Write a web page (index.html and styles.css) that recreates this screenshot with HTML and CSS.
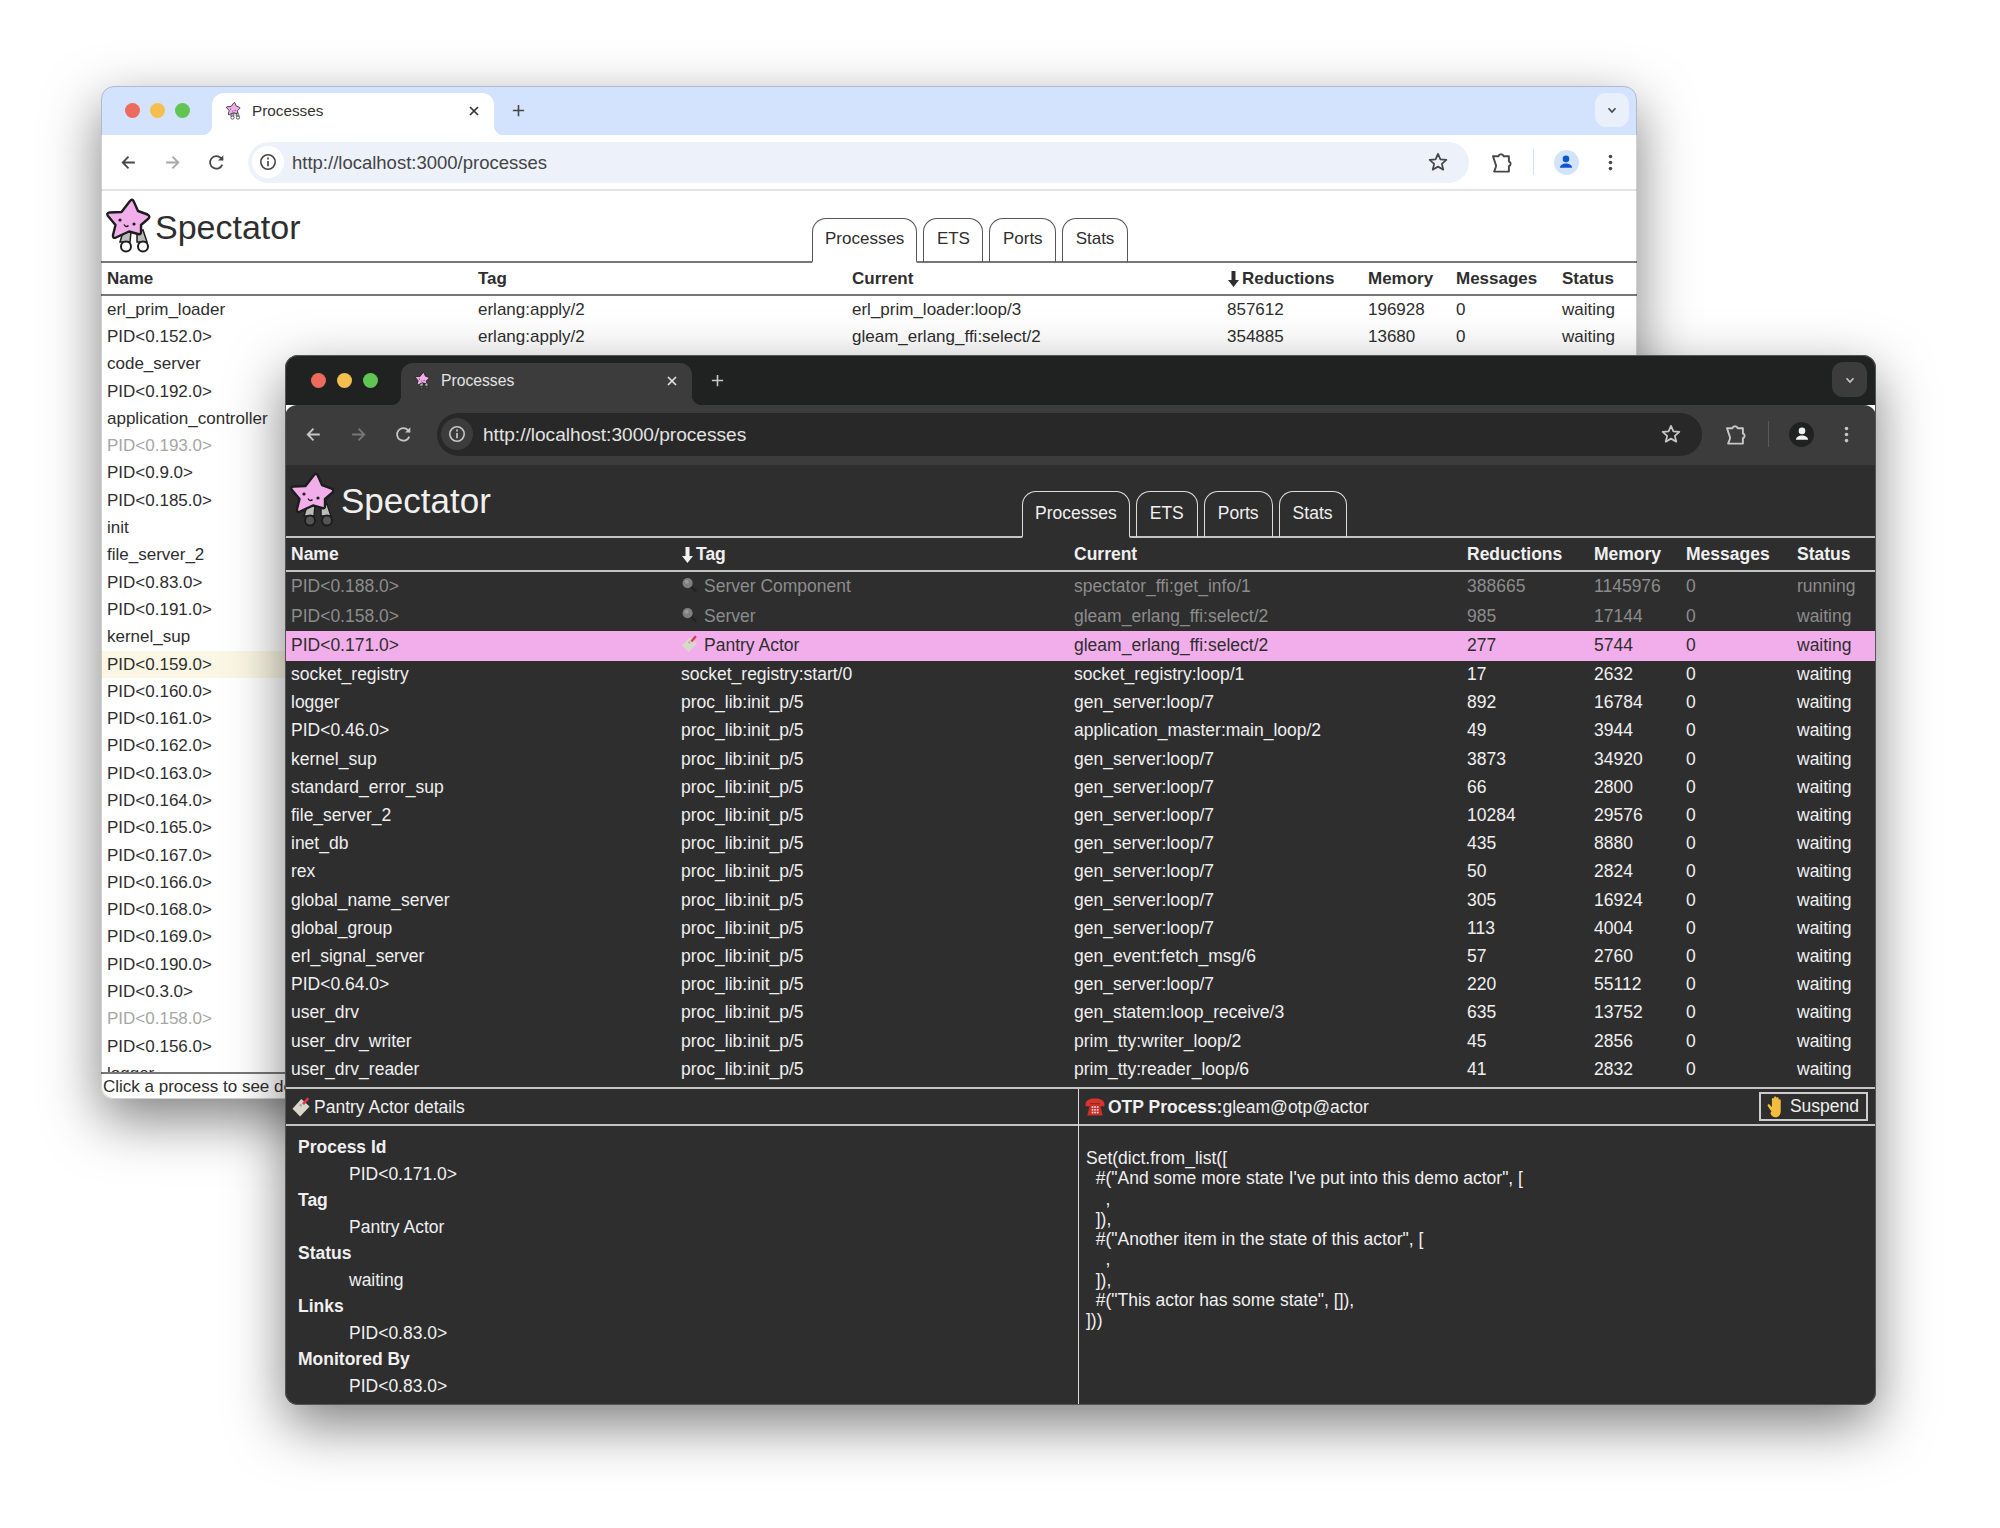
FILE: index.html
```html
<!DOCTYPE html>
<html lang="en">

<head>
    <meta charset="UTF-8">
    <meta name="viewport" content="width=device-width, initial-scale=1.0">
    <title>Spectator</title>
    <link rel="stylesheet" href="styles.css">
</head>

<body>
    <!-- shared icons -->
    <svg class="sprite" width="0" height="0">
        <symbol id="i-logo" viewBox="0 0 55 62">
            <g class="logo-legs">
                <path d="M23 37 L20 47 L30 47 L31 37 Z"/>
                <path d="M37 37 L37 47 L47 47 L43 35 Z"/>
                <circle cx="26" cy="51.500" r="5"/>
                <circle cx="43" cy="51.500" r="5"/>
            </g>
            <path class="logo-star" d="M30 6 Q32.500 3 34 7 L38 16 L47.500 19.500 Q51 21.500 48 24 L41 30 L41 37 Q41 40 38 39 L29 36.500 L16 42.500 Q12.500 44 13 40 L15.500 30 L8 21 Q6 18 9.500 17.500 L21.500 17 Z"/>
            <circle class="logo-face" cx="20" cy="25" r="1.600"/>
            <circle class="logo-face" cx="34" cy="29" r="1.600"/>
            <path class="logo-mouth" d="M24 29.500 Q26 33 28.500 30.500"/>
        </symbol>
        <symbol id="i-back" viewBox="0 0 20 20">
            <path d="M16 10H5M10 4.500 4.500 10l5.500 5.500" fill="none" stroke="currentColor" stroke-width="1.700"/>
        </symbol>
        <symbol id="i-forward" viewBox="0 0 20 20">
            <path d="M4 10h11M10 4.500l5.500 5.500-5.500 5.500" fill="none" stroke="currentColor" stroke-width="1.700"/>
        </symbol>
        <symbol id="i-reload" viewBox="0 0 20 20">
            <path d="M15.500 12a6 6 0 1 1-1.200-6.200L16 7.500" fill="none" stroke="currentColor" stroke-width="1.700"/>
            <path d="M16.500 3v5h-5z" fill="currentColor"/>
        </symbol>
        <symbol id="i-info" viewBox="0 0 20 20">
            <circle cx="10" cy="10" r="7.200" fill="none" stroke="currentColor" stroke-width="1.600"/>
            <path d="M10 9v5.200M10 5.600v1.800" fill="none" stroke="currentColor" stroke-width="1.700"/>
        </symbol>
        <symbol id="i-star" viewBox="0 0 20 20">
            <path d="M10 2.600l2.200 5 5.400.5-4.100 3.600 1.300 5.300L10 14.200 5.200 17l1.300-5.300-4.100-3.600 5.400-.5z" fill="none" stroke="currentColor" stroke-width="1.600" stroke-linejoin="round"/>
        </symbol>
        <symbol id="i-puzzle" viewBox="0 0 22 22">
            <path d="M3.500 5.500h4.800a2.400 2.400 0 0 1 4.600 0h4.600v4.600a2.200 2.200 0 0 1 0 4.200v4.700H4.500l1.300-3.400a2.600 2.600 0 0 0 .2-2.600z" fill="none" stroke="currentColor" stroke-width="1.700" stroke-linejoin="round"/>
        </symbol>
        <symbol id="i-person" viewBox="0 0 24 24">
            <circle cx="12" cy="8.600" r="3.600" fill="currentColor"/>
            <path d="M5.400 18.400c0-3 3-4.800 6.600-4.800s6.600 1.800 6.600 4.800z" fill="currentColor"/>
        </symbol>
        <symbol id="i-kebab" viewBox="0 0 20 20">
            <circle cx="10" cy="4.200" r="1.700" fill="currentColor"/>
            <circle cx="10" cy="10" r="1.700" fill="currentColor"/>
            <circle cx="10" cy="15.800" r="1.700" fill="currentColor"/>
        </symbol>
        <symbol id="i-close" viewBox="0 0 14 14">
            <path d="M3 3l8 8M11 3l-8 8" fill="none" stroke="currentColor" stroke-width="1.700"/>
        </symbol>
        <symbol id="i-plus" viewBox="0 0 16 16">
            <path d="M8 2v12M2 8h12" fill="none" stroke="currentColor" stroke-width="1.700"/>
        </symbol>
        <symbol id="i-chevron" viewBox="0 0 12 12">
            <path d="M2.500 4.200 6 8l3.500-3.800" fill="none" stroke="currentColor" stroke-width="1.600"/>
        </symbol>
        <symbol id="i-sort" viewBox="0 0 12 18">
            <path d="M4 1h4v9h3.500L6 17 .5 10H4z" fill="currentColor"/>
        </symbol>
        <symbol id="i-search" viewBox="0 0 18 18">
            <path d="M10 10l6 6" stroke="#222" stroke-width="2.400"/>
            <circle cx="7" cy="7" r="5.400" fill="#7f7f7f"/>
            <circle cx="6" cy="5.600" r="2.200" fill="#9a9a9a"/>
        </symbol>
        <symbol id="i-tag" viewBox="1.500 1.500 16.500 17">
            <path d="M10 3.200 17 9.500 9 18 2.500 11.400z" fill="#d9d6cc"/>
            <circle cx="9.500" cy="8.500" r="1" fill="#a9a69c"/>
            <path d="M11.500 7.500 16 2.500" stroke="#e0334a" stroke-width="2.200"/>
        </symbol>
        <symbol id="i-phone" viewBox="1 1.500 18 16.500">
            <path d="M1.500 7.500C1.500 3.500 5 2 10 2s8.500 1.500 8.500 5.500v1.500h-4V6.500h-9V9h-4z" fill="#d8332c"/>
            <path d="M5.500 7h9l2.500 10.500H3z" fill="#c62f28"/>
            <g fill="#f5dcd6">
                <rect x="7" y="9" width="1.500" height="1.500"/>
                <rect x="9.300" y="9" width="1.500" height="1.500"/>
                <rect x="11.600" y="9" width="1.500" height="1.500"/>
                <rect x="7" y="11.500" width="1.500" height="1.500"/>
                <rect x="9.300" y="11.500" width="1.500" height="1.500"/>
                <rect x="11.600" y="11.500" width="1.500" height="1.500"/>
                <rect x="7" y="14" width="1.500" height="1.500"/>
                <rect x="9.300" y="14" width="1.500" height="1.500"/>
                <rect x="11.600" y="14" width="1.500" height="1.500"/>
            </g>
        </symbol>
        <symbol id="i-hand" viewBox="2 1.500 12.500 17.500">
            <path d="M5.500 14 2.500 9.500c-.6-1 .8-1.900 1.600-1L5.800 10.500V4c0-1.100 1.600-1.100 1.700 0v4.500V2.800c0-1.200 1.800-1.200 1.800 0v5.700V3.300c0-1.200 1.800-1.200 1.800 0v5.500V5c0-1.100 1.600-1.100 1.700 0v8.500c0 3-1.700 5-4.300 5-1.700 0-3-1.200-4-3.500z" fill="#f5bd3c"/>
        </symbol>
    </svg>

    <!-- light window, sits behind -->
    <section class="win win-light">
        <div class="tabstrip">
            <div class="lights"><i class="red"></i><i class="yellow"></i><i class="green"></i></div>
            <div class="chrome-tab">
                <svg class="favicon"><use href="#i-logo"/></svg>
                <span class="chrome-tab-title">Processes</span>
                <svg class="ico-close"><use href="#i-close"/></svg>
            </div>
            <svg class="ico-plus"><use href="#i-plus"/></svg>
            <div class="strip-menu"><svg class="ico-chevron"><use href="#i-chevron"/></svg></div>
        </div>
        <div class="toolbar">
            <span class="tb-btn"><svg><use href="#i-back"/></svg></span>
            <span class="tb-btn tb-off"><svg><use href="#i-forward"/></svg></span>
            <span class="tb-btn"><svg><use href="#i-reload"/></svg></span>
            <div class="omni">
                <span class="omni-info"><svg><use href="#i-info"/></svg></span>
                <span class="omni-url">http://localhost:3000/processes</span>
                <svg class="omni-star"><use href="#i-star"/></svg>
            </div>
            <span class="tb-btn"><svg class="puzzle"><use href="#i-puzzle"/></svg></span>
            <span class="tb-sep"></span>
            <span class="tb-btn"><span class="avatar"><svg><use href="#i-person"/></svg></span></span>
            <span class="tb-btn"><svg><use href="#i-kebab"/></svg></span>
        </div>
        <div class="page">
            <header class="app-head">
                <div class="brand">
                    <svg class="logo"><use href="#i-logo"/></svg>
                    <span class="brand-name">Spectator</span>
                </div>
                <nav class="tabs">
                    <a class="tab active">Processes</a>
                    <a class="tab">ETS</a>
                    <a class="tab">Ports</a>
                    <a class="tab">Stats</a>
                </nav>
            </header>
            <div class="table-wrap">
                <table class="proc-table">
                    <colgroup>
                        <col class="c-name"><col class="c-tag"><col class="c-current"><col class="c-red"><col class="c-mem"><col class="c-msg"><col class="c-status">
                    </colgroup>
                    <thead>
                        <tr><th>Name</th><th>Tag</th><th>Current</th><th><svg class="sort"><use href="#i-sort"/></svg>Reductions</th><th>Memory</th><th>Messages</th><th>Status</th></tr>
                    </thead>
                    <tbody>
                        <tr><td>erl_prim_loader</td><td>erlang:apply/2</td><td>erl_prim_loader:loop/3</td><td>857612</td><td>196928</td><td>0</td><td>waiting</td></tr>
                        <tr><td>PID&lt;0.152.0&gt;</td><td>erlang:apply/2</td><td>gleam_erlang_ffi:select/2</td><td>354885</td><td>13680</td><td>0</td><td>waiting</td></tr>
                        <tr><td colspan="7">code_server</td></tr>
                        <tr><td colspan="7">PID&lt;0.192.0&gt;</td></tr>
                        <tr><td colspan="7">application_controller</td></tr>
                        <tr class="dim"><td colspan="7">PID&lt;0.193.0&gt;</td></tr>
                        <tr><td colspan="7">PID&lt;0.9.0&gt;</td></tr>
                        <tr><td colspan="7">PID&lt;0.185.0&gt;</td></tr>
                        <tr><td colspan="7">init</td></tr>
                        <tr><td colspan="7">file_server_2</td></tr>
                        <tr><td colspan="7">PID&lt;0.83.0&gt;</td></tr>
                        <tr><td colspan="7">PID&lt;0.191.0&gt;</td></tr>
                        <tr><td colspan="7">kernel_sup</td></tr>
                        <tr class="hover"><td colspan="7">PID&lt;0.159.0&gt;</td></tr>
                        <tr><td colspan="7">PID&lt;0.160.0&gt;</td></tr>
                        <tr><td colspan="7">PID&lt;0.161.0&gt;</td></tr>
                        <tr><td colspan="7">PID&lt;0.162.0&gt;</td></tr>
                        <tr><td colspan="7">PID&lt;0.163.0&gt;</td></tr>
                        <tr><td colspan="7">PID&lt;0.164.0&gt;</td></tr>
                        <tr><td colspan="7">PID&lt;0.165.0&gt;</td></tr>
                        <tr><td colspan="7">PID&lt;0.167.0&gt;</td></tr>
                        <tr><td colspan="7">PID&lt;0.166.0&gt;</td></tr>
                        <tr><td colspan="7">PID&lt;0.168.0&gt;</td></tr>
                        <tr><td colspan="7">PID&lt;0.169.0&gt;</td></tr>
                        <tr><td colspan="7">PID&lt;0.190.0&gt;</td></tr>
                        <tr><td colspan="7">PID&lt;0.3.0&gt;</td></tr>
                        <tr class="dim"><td colspan="7">PID&lt;0.158.0&gt;</td></tr>
                        <tr><td colspan="7">PID&lt;0.156.0&gt;</td></tr>
                        <tr><td colspan="7">logger</td></tr>
                    </tbody>
                </table>
            </div>
            <div class="status-note">Click a process to see details</div>
        </div>
    </section>

    <!-- dark window, in front -->
    <section class="win win-dark">
        <div class="tabstrip">
            <div class="lights"><i class="red"></i><i class="yellow"></i><i class="green"></i></div>
            <div class="chrome-tab">
                <svg class="favicon"><use href="#i-logo"/></svg>
                <span class="chrome-tab-title">Processes</span>
                <svg class="ico-close"><use href="#i-close"/></svg>
            </div>
            <svg class="ico-plus"><use href="#i-plus"/></svg>
            <div class="strip-menu"><svg class="ico-chevron"><use href="#i-chevron"/></svg></div>
        </div>
        <div class="toolbar">
            <span class="tb-btn"><svg><use href="#i-back"/></svg></span>
            <span class="tb-btn tb-off"><svg><use href="#i-forward"/></svg></span>
            <span class="tb-btn"><svg><use href="#i-reload"/></svg></span>
            <div class="omni">
                <span class="omni-info"><svg><use href="#i-info"/></svg></span>
                <span class="omni-url">http://localhost:3000/processes</span>
                <svg class="omni-star"><use href="#i-star"/></svg>
            </div>
            <span class="tb-btn"><svg class="puzzle"><use href="#i-puzzle"/></svg></span>
            <span class="tb-sep"></span>
            <span class="tb-btn"><span class="avatar"><svg><use href="#i-person"/></svg></span></span>
            <span class="tb-btn"><svg><use href="#i-kebab"/></svg></span>
        </div>
        <div class="page">
            <header class="app-head">
                <div class="brand">
                    <svg class="logo"><use href="#i-logo"/></svg>
                    <span class="brand-name">Spectator</span>
                </div>
                <nav class="tabs">
                    <a class="tab active">Processes</a>
                    <a class="tab">ETS</a>
                    <a class="tab">Ports</a>
                    <a class="tab">Stats</a>
                </nav>
            </header>
            <div class="table-wrap">
                <table class="proc-table">
                    <colgroup>
                        <col class="c-name"><col class="c-tag"><col class="c-current"><col class="c-red"><col class="c-mem"><col class="c-msg"><col class="c-status">
                    </colgroup>
                    <thead>
                        <tr><th>Name</th><th><svg class="sort"><use href="#i-sort"/></svg>Tag</th><th>Current</th><th>Reductions</th><th>Memory</th><th>Messages</th><th>Status</th></tr>
                    </thead>
                    <tbody>
                        <tr class="dim tall"><td>PID&lt;0.188.0&gt;</td><td><svg class="tag-ico"><use href="#i-search"/></svg>Server Component</td><td>spectator_ffi:get_info/1</td><td>388665</td><td>1145976</td><td>0</td><td>running</td></tr>
                        <tr class="dim tall"><td>PID&lt;0.158.0&gt;</td><td><svg class="tag-ico"><use href="#i-search"/></svg>Server</td><td>gleam_erlang_ffi:select/2</td><td>985</td><td>17144</td><td>0</td><td>waiting</td></tr>
                        <tr class="selected tall"><td>PID&lt;0.171.0&gt;</td><td><svg class="tag-ico"><use href="#i-tag"/></svg>Pantry Actor</td><td>gleam_erlang_ffi:select/2</td><td>277</td><td>5744</td><td>0</td><td>waiting</td></tr>
                        <tr><td>socket_registry</td><td>socket_registry:start/0</td><td>socket_registry:loop/1</td><td>17</td><td>2632</td><td>0</td><td>waiting</td></tr>
                        <tr><td>logger</td><td>proc_lib:init_p/5</td><td>gen_server:loop/7</td><td>892</td><td>16784</td><td>0</td><td>waiting</td></tr>
                        <tr><td>PID&lt;0.46.0&gt;</td><td>proc_lib:init_p/5</td><td>application_master:main_loop/2</td><td>49</td><td>3944</td><td>0</td><td>waiting</td></tr>
                        <tr><td>kernel_sup</td><td>proc_lib:init_p/5</td><td>gen_server:loop/7</td><td>3873</td><td>34920</td><td>0</td><td>waiting</td></tr>
                        <tr><td>standard_error_sup</td><td>proc_lib:init_p/5</td><td>gen_server:loop/7</td><td>66</td><td>2800</td><td>0</td><td>waiting</td></tr>
                        <tr><td>file_server_2</td><td>proc_lib:init_p/5</td><td>gen_server:loop/7</td><td>10284</td><td>29576</td><td>0</td><td>waiting</td></tr>
                        <tr><td>inet_db</td><td>proc_lib:init_p/5</td><td>gen_server:loop/7</td><td>435</td><td>8880</td><td>0</td><td>waiting</td></tr>
                        <tr><td>rex</td><td>proc_lib:init_p/5</td><td>gen_server:loop/7</td><td>50</td><td>2824</td><td>0</td><td>waiting</td></tr>
                        <tr><td>global_name_server</td><td>proc_lib:init_p/5</td><td>gen_server:loop/7</td><td>305</td><td>16924</td><td>0</td><td>waiting</td></tr>
                        <tr><td>global_group</td><td>proc_lib:init_p/5</td><td>gen_server:loop/7</td><td>113</td><td>4004</td><td>0</td><td>waiting</td></tr>
                        <tr><td>erl_signal_server</td><td>proc_lib:init_p/5</td><td>gen_event:fetch_msg/6</td><td>57</td><td>2760</td><td>0</td><td>waiting</td></tr>
                        <tr><td>PID&lt;0.64.0&gt;</td><td>proc_lib:init_p/5</td><td>gen_server:loop/7</td><td>220</td><td>55112</td><td>0</td><td>waiting</td></tr>
                        <tr><td>user_drv</td><td>proc_lib:init_p/5</td><td>gen_statem:loop_receive/3</td><td>635</td><td>13752</td><td>0</td><td>waiting</td></tr>
                        <tr><td>user_drv_writer</td><td>proc_lib:init_p/5</td><td>prim_tty:writer_loop/2</td><td>45</td><td>2856</td><td>0</td><td>waiting</td></tr>
                        <tr><td>user_drv_reader</td><td>proc_lib:init_p/5</td><td>prim_tty:reader_loop/6</td><td>41</td><td>2832</td><td>0</td><td>waiting</td></tr>
                    </tbody>
                </table>
            </div>
            <div class="details">
                <div class="panel panel-left">
                    <div class="panel-head">
                        <svg class="head-ico"><use href="#i-tag"/></svg>
                        <span>Pantry Actor details</span>
                    </div>
                    <dl class="facts">
                        <dt>Process Id</dt>
                        <dd>PID&lt;0.171.0&gt;</dd>
                        <dt>Tag</dt>
                        <dd>Pantry Actor</dd>
                        <dt>Status</dt>
                        <dd>waiting</dd>
                        <dt>Links</dt>
                        <dd>PID&lt;0.83.0&gt;</dd>
                        <dt>Monitored By</dt>
                        <dd>PID&lt;0.83.0&gt;</dd>
                    </dl>
                </div>
                <div class="panel">
                    <div class="panel-head">
                        <svg class="head-ico"><use href="#i-phone"/></svg>
                        <span><b>OTP Process:</b>gleam@otp@actor</span>
                        <button class="suspend"><svg class="hand-ico"><use href="#i-hand"/></svg>Suspend</button>
                    </div>
<pre class="state">Set(dict.from_list([
  #("And some more state I've put into this demo actor", [
    ,
  ]),
  #("Another item in the state of this actor", [
    ,
  ]),
  #("This actor has some state", []),
]))</pre>
                </div>
            </div>
        </div>
    </section>
</body>

</html>
```

FILE: styles.css
```css
/* canvas */
html,
body {
    margin: 0;
    padding: 0;
    background: #fff;
}

body {
    position: relative;
    width: 2000px;
    height: 1528px;
    overflow: hidden;
    font-family: "Liberation Sans", Arial, sans-serif;
}

.sprite {
    position: absolute;
}

/* windows */
.win {
    position: absolute;
    display: flex;
    flex-direction: column;
    border-radius: 13px;
    overflow: hidden;
    outline: 1px solid var(--win-edge);
    outline-offset: -1px;
    box-shadow: 0 20px 55px rgba(0, 0, 0, 0.5);
}

.win-light {
    left: 101px;
    top: 86px;
    width: 1536px;
    height: 1013px;
    --win-edge: rgba(0, 0, 0, 0.18);
    --strip: #d3e3fd;
    --strip-h: 49px;
    --tab-bg: #fff;
    --tab-w: 282px;
    --tab-h: 42px;
    --tab-text: #333;
    --tab-font: 15.300px;
    --lights-w: 111px;
    --lights-pad: 24px;
    --light-gap: 10px;
    --plus-gap: 17px;
    --menu-bg: #e9f0fc;
    --menu-w: 34px;
    --menu-h: 34px;
    --menu-right: 8px;
    --tool-bg: #fff;
    --tool-h: 56px;
    --tool-edge: #e4e4e4;
    --tool-pad-l: 5px;
    --tool-pad-r: 5px;
    --cell: 44px;
    --icon: #474747;
    --icon-off: #a6a6a6;
    --omni-bg: #edf2fa;
    --omni-h: 41px;
    --omni-gap: 10px;
    --url-gap: 8px;
    --info-bg: #fff;
    --url-size: 18.500px;
    --url-text: #444;
    --sep: #d3e3fd;
    --avatar-bg: #d3e3fd;
    --avatar-fg: #0b57d0;
    --page-bg: #fff;
    --text: #2e2e2e;
    --dim: #a6a6a6;
    --rule: #777;
    --font: 17px;
    --head-h: 70px;
    --brand-w: 711px;
    --brand-size: 34px;
    --brand-gap: 0px;
    --tab-line: #555;
    --app-tab-h: 45px;
    --app-tab-lh: 40px;
    --app-tab-pad: 12.500px;
    --th-h: 31px;
    --row-h: 27.300px;
    --feet: #fff;
}

.win-light .c-name { width: 371px; }
.win-light .c-tag { width: 374px; }
.win-light .c-current { width: 375px; }
.win-light .c-red { width: 141px; }
.win-light .c-mem { width: 88px; }
.win-light .c-msg { width: 106px; }
.win-light .c-status { width: 81px; }

.win-dark {
    left: 285px;
    top: 355px;
    width: 1591px;
    height: 1050px;
    --win-edge: #555;
    --strip: #202222;
    --strip-h: 50px;
    --tab-bg: #3c3c3c;
    --tab-w: 291px;
    --tab-h: 42px;
    --tab-text: #e3e3e3;
    --tab-font: 15.700px;
    --lights-w: 116px;
    --lights-pad: 26px;
    --light-gap: 11px;
    --plus-gap: 18px;
    --menu-bg: #3c3c3c;
    --menu-w: 35px;
    --menu-h: 35px;
    --menu-right: 9px;
    --tool-bg: #3c3c3c;
    --tool-h: 60px;
    --tool-edge: #3c3c3c;
    --tool-pad-l: 6px;
    --tool-pad-r: 7px;
    --cell: 45px;
    --icon: #c7c7c7;
    --icon-off: #777;
    --omni-bg: #282828;
    --omni-h: 43px;
    --omni-gap: 11px;
    --url-gap: 10px;
    --info-bg: #3c3c3c;
    --url-size: 19.100px;
    --url-text: #e3e3e3;
    --sep: #5a5a5a;
    --avatar-bg: #202222;
    --avatar-fg: #f0f0f0;
    --page-bg: #2e2e2e;
    --text: #f0f0f0;
    --dim: #8c8c8c;
    --rule: #c4c4c4;
    --font: 17.500px;
    --head-h: 71px;
    --brand-w: 737px;
    --brand-size: 35px;
    --brand-gap: 2px;
    --tab-line: #ddd;
    --app-tab-h: 47px;
    --app-tab-lh: 42px;
    --app-tab-pad: 13px;
    --th-h: 32px;
    --row-h: 28.200px;
    --feet: #555;
}

.win-dark .c-name { width: 390px; }
.win-dark .c-tag { width: 393px; }
.win-dark .c-current { width: 393px; }
.win-dark .c-red { width: 127px; }
.win-dark .c-mem { width: 92px; }
.win-dark .c-msg { width: 111px; }
.win-dark .c-status { width: 85px; }

/* browser tab strip */
.tabstrip {
    display: flex;
    align-items: flex-end;
    height: var(--strip-h);
    flex: none;
    background: var(--strip);
}

.lights {
    display: flex;
    align-items: center;
    gap: var(--light-gap);
    box-sizing: border-box;
    width: var(--lights-w);
    height: var(--tab-h);
    padding-left: var(--lights-pad);
    padding-bottom: 7px;
}

.lights i {
    width: 15px;
    height: 15px;
    border-radius: 50%;
}

.lights .red {
    background: #ed6a5e;
}

.lights .yellow {
    background: #f4bf4f;
}

.lights .green {
    background: #61c554;
}

.chrome-tab {
    position: relative;
    display: flex;
    align-items: center;
    box-sizing: border-box;
    width: var(--tab-w);
    height: var(--tab-h);
    padding: 0 12px 6px;
    background: var(--tab-bg);
    border-radius: 12px 12px 0 0;
    color: var(--tab-text);
}

.chrome-tab::before,
.chrome-tab::after {
    content: "";
    position: absolute;
    bottom: 0;
    width: 10px;
    height: 10px;
}

.chrome-tab::before {
    left: -10px;
    background: radial-gradient(circle at 0 0, transparent 10px, var(--tab-bg) 10.500px);
}

.chrome-tab::after {
    right: -10px;
    background: radial-gradient(circle at 100% 0, transparent 10px, var(--tab-bg) 10.500px);
}

.favicon {
    width: 18px;
    height: 20px;
    flex: none;
}

.chrome-tab-title {
    flex: 1;
    margin-left: 10px;
    font-size: var(--tab-font);
}

.ico-close {
    width: 14px;
    height: 14px;
    margin-right: 1px;
}

.ico-plus {
    width: 15px;
    height: 15px;
    margin: 0 0 17px var(--plus-gap);
    color: var(--icon);
}

.strip-menu {
    display: flex;
    align-items: center;
    justify-content: center;
    width: var(--menu-w);
    height: var(--menu-h);
    margin: 0 var(--menu-right) 8px auto;
    background: var(--menu-bg);
    border-radius: 11px;
    color: var(--icon);
}

.ico-chevron {
    width: 12px;
    height: 12px;
}

/* browser toolbar */
.toolbar {
    display: flex;
    align-items: center;
    box-sizing: border-box;
    height: var(--tool-h);
    flex: none;
    padding: 0 var(--tool-pad-r) 0 var(--tool-pad-l);
    background: var(--tool-bg);
    border-bottom: 2px solid var(--tool-edge);
    border-radius: 12px 12px 0 0;
    color: var(--icon);
}

.tb-btn {
    display: flex;
    align-items: center;
    justify-content: center;
    width: var(--cell);
    flex: none;
}

.tb-btn svg {
    width: 21px;
    height: 21px;
}

.tb-btn svg.puzzle {
    width: 25px;
    height: 25px;
}

.tb-off {
    color: var(--icon-off);
}

.tb-sep {
    width: 1px;
    height: 26px;
    margin: 0 10px;
    background: var(--sep);
    flex: none;
}

.avatar {
    display: flex;
    align-items: center;
    justify-content: center;
    width: 25px;
    height: 25px;
    background: var(--avatar-bg);
    border-radius: 50%;
    color: var(--avatar-fg);
}

.avatar svg {
    width: 22px;
    height: 22px;
}

.omni {
    display: flex;
    align-items: center;
    flex: 1;
    height: var(--omni-h);
    margin: 0 var(--omni-gap);
    padding: 0 20px 0 4px;
    background: var(--omni-bg);
    border-radius: 22px;
}

.omni-info {
    display: flex;
    align-items: center;
    justify-content: center;
    width: 32px;
    height: 32px;
    background: var(--info-bg);
    border-radius: 50%;
}

.omni-info svg {
    width: 20px;
    height: 20px;
}

.omni-url {
    flex: 1;
    margin-left: var(--url-gap);
    padding-top: 1px;
    font-size: var(--url-size);
    color: var(--url-text);
}

.omni-star {
    width: 22px;
    height: 22px;
}

/* app page */
.page {
    display: flex;
    flex-direction: column;
    flex: 1;
    min-height: 0;
    background: var(--page-bg);
    color: var(--text);
    font-size: var(--font);
}

.app-head {
    display: flex;
    align-items: flex-end;
    box-sizing: content-box;
    height: var(--head-h);
    flex: none;
    border-bottom: 2px solid var(--rule);
}

.brand {
    display: flex;
    align-items: flex-start;
    align-self: flex-start;
    width: var(--brand-w);
    flex: none;
    padding-top: 4px;
}

.logo {
    width: 55px;
    height: 62px;
    margin-left: -1px;
    flex: none;
}

.brand-name {
    margin: 10px 0 0 var(--brand-gap);
    font-size: var(--brand-size);
    line-height: 44px;
}

.logo-star {
    fill: #f2aeeb;
    stroke: #1d1d1d;
    stroke-width: 2.400px;
    stroke-linejoin: round;
}

.logo-legs path {
    fill: #bbb;
    stroke: #1d1d1d;
    stroke-width: 1.500px;
}

.logo-legs circle {
    fill: var(--feet);
    stroke: #1d1d1d;
    stroke-width: 2px;
}

.logo-face {
    fill: #1d1d1d;
}

.logo-mouth {
    fill: none;
    stroke: #1d1d1d;
    stroke-width: 1.500px;
}

.tabs {
    display: flex;
    gap: 6px;
    margin-bottom: -2px;
}

.tab {
    box-sizing: border-box;
    height: var(--app-tab-h);
    padding: 0 var(--app-tab-pad);
    border: 1px solid var(--tab-line);
    border-bottom: 2px solid var(--rule);
    border-radius: 14px 14px 0 0;
    line-height: var(--app-tab-lh);
}

.tab.active {
    padding: 0 12px;
    border-bottom-color: var(--page-bg);
}

/* process table */
.table-wrap {
    flex: 1;
    min-height: 0;
    overflow: hidden;
}

.proc-table {
    width: 100%;
    border-collapse: separate;
    border-spacing: 0;
    table-layout: fixed;
}

.proc-table th {
    height: var(--th-h);
    padding: 0 0 0 6px;
    border-bottom: 2px solid var(--rule);
    box-sizing: content-box;
    text-align: left;
    font-weight: bold;
    white-space: nowrap;
}

.proc-table td {
    height: var(--row-h);
    padding: 0 0 0 6px;
    box-sizing: border-box;
    white-space: nowrap;
}

.proc-table .tall td {
    height: 29.500px;
}

.dim td {
    color: var(--dim);
}

.hover td {
    background: #fbf7e4;
}

.selected td {
    background: #f2aeeb;
    color: #2e2e2e;
}

.sort {
    width: 13px;
    height: 18px;
    margin-right: 2px;
    vertical-align: -4px;
}

.tag-ico {
    width: 17px;
    height: 18px;
    margin-right: 6px;
    vertical-align: -2px;
}

.status-note {
    flex: none;
    height: 25px;
    padding: 0 2px;
    border-top: 2px solid var(--rule);
    line-height: 25px;
    white-space: nowrap;
}

/* details */
.details {
    display: grid;
    grid-template-columns: 794px 1fr;
    flex: none;
    height: 316px;
    border-top: 2px solid var(--rule);
}

.panel-left {
    border-right: 1px solid #ddd;
}

.panel-head {
    display: flex;
    align-items: center;
    box-sizing: border-box;
    height: 37px;
    padding: 1px 8px 0 6px;
    border-bottom: 2px solid var(--rule);
}

.head-ico {
    width: 20px;
    height: 20px;
    margin-right: 3px;
    flex: none;
}

.hand-ico {
    width: 18px;
    height: 22px;
    margin-right: 6px;
    flex: none;
}

.suspend {
    display: flex;
    align-items: center;
    box-sizing: border-box;
    height: 29px;
    margin: -1px 0 0 auto;
    padding: 0 7px 0 5px;
    background: none;
    border: 2px solid #ccc;
    color: inherit;
    font: inherit;
}

.facts {
    margin: 0;
    padding: 8px 13px;
    line-height: 26.500px;
}

.facts dt {
    font-weight: bold;
}

.facts dd {
    margin: 0 0 0 51px;
}

.state {
    margin: 0;
    padding: 22px 7px 0;
    font-family: "Liberation Sans", Arial, sans-serif;
    font-size: 17.500px;
    line-height: 20.300px;
}
```
